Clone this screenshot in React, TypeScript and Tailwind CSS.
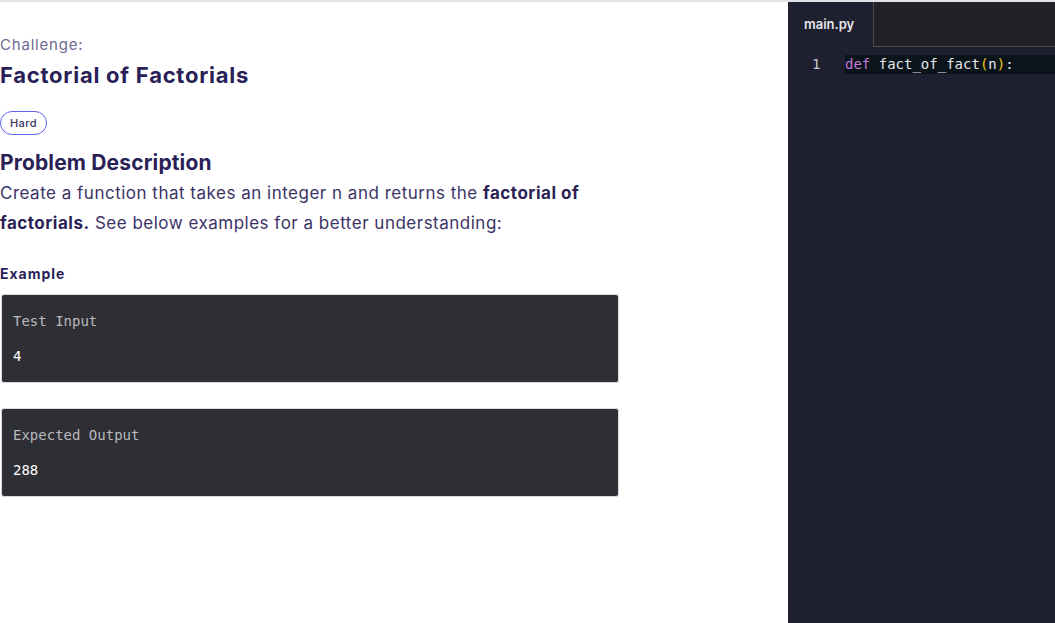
import React from "react";

export default function App() {
  return (
    <div className="w-[1055px] h-[623px] bg-white border-t-2 border-[#e2e2e8] flex overflow-hidden" style={{ fontFamily: "Inter, 'Noto Sans', sans-serif" }}>
      <div className="w-[788px] shrink-0 pt-[33px]">
        <div className="text-[15px] leading-[20px] text-[#6e6a92] tracking-[0.8px]">Challenge:</div>
        <h1 className="mt-[5px] text-[22px] leading-[30px] font-bold text-[#2b1f58] tracking-[0.75px]">Factorial of Factorials</h1>
        <div className="mt-[21px] inline-flex h-[24px] items-center px-[9px] rounded-full border border-[#6363ee] text-[11px] font-medium text-[#3a3163] tracking-[0.4px]">Hard</div>
        <h2 className="mt-[14px] text-[21px] leading-[28px] font-bold text-[#2b1f58] tracking-[0.15px]">Problem Description</h2>
        <p className="w-[640px] pt-[1px] text-[17px] leading-[30px] text-[#3b3366] tracking-[0.5px]">
          Create a function that takes an integer n and returns the <b className="font-bold text-[#2b1f58]">factorial of</b>
          <br />
          <b className="font-bold text-[#2b1f58]">factorials.</b> See below examples for a better understanding:
        </p>
        <div className="mt-[26px] text-[14px] leading-[20px] font-bold text-[#2b1f58] tracking-[1px]">Example</div>
        <div className="mt-[10px] w-[619px] flex flex-col gap-[25px]" style={{ fontFamily: "'DejaVu Sans Mono', monospace" }}>
          <div className="h-[89px] ml-[1px] rounded-[3px] bg-[#2e2f35] border border-[#d5d9e0] pl-[11px] pt-[16px] text-[14px] leading-[20px]">
            <div className="text-[#b9b9bd]">Test Input</div>
            <div className="mt-[15px] text-white">4</div>
          </div>
          <div className="h-[89px] ml-[1px] rounded-[3px] bg-[#2e2f35] border border-[#d5d9e0] pl-[11px] pt-[16px] text-[14px] leading-[20px]">
            <div className="text-[#b9b9bd]">Expected Output</div>
            <div className="mt-[15px] text-white">288</div>
          </div>
        </div>
      </div>
      <div className="flex-1 bg-[#1e2030] flex flex-col">
        <div className="flex h-[45px]">
          <div className="w-[85px] flex items-center pl-[16px] text-[13px] font-semibold text-[#e6e6ea]">main.py</div>
          <div className="flex-1 bg-[#212226] border-l border-b border-[#4a4a4e]"></div>
        </div>
        <div className="mt-[8px] flex h-[19px] items-center text-[14px]" style={{ fontFamily: "'DejaVu Sans Mono', monospace" }}>
          <div className="w-[57px] pl-[24px] text-[#c5c8d4]">1</div>
          <div className="flex-1 h-full bg-[#0b141b] flex items-center">
            <span className="text-[#c678dd]">def</span>
            <span className="text-[#e6e6ea]">&nbsp;fact_of_fact</span>
            <span className="text-[#f1c40f]">(</span>
            <span className="text-[#e6e6ea]">n</span>
            <span className="text-[#f1c40f]">)</span>
            <span className="text-[#e6e6ea]">:</span>
          </div>
        </div>
      </div>
    </div>
  );
}
